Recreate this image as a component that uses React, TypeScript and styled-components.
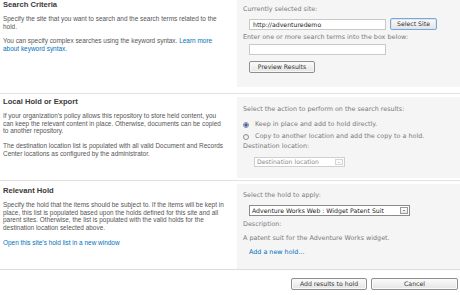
import React from "react";
import styled, { createGlobalStyle } from "styled-components";

const Global = createGlobalStyle`
  html, body { margin: 0; padding: 0; background: #fff; }
  * { box-sizing: border-box; }
`;

const Page = styled.div`
  width: 460px;
  height: 295px;
  overflow: hidden;
  background: #fff;
`;

const Section = styled.div<{ $gapTop?: number; $line?: boolean }>`
  display: grid;
  grid-template-columns: 237px 1fr;
  margin-top: ${(p) => p.$gapTop ?? 0}px;
  border-top: ${(p) => (p.$line ? "1px solid #e1e1e1" : "none")};
  padding-top: ${(p) => (p.$line ? 3 : 0)}px;
`;

const Desc = styled.div<{ $pt?: number }>`
  padding: ${(p) => p.$pt ?? 1}px 10px 0 3px;
  font-family: "Liberation Sans", Arial, sans-serif;
  font-size: 6.45px;
  line-height: 7.7px;
  color: #555;
`;

const Title = styled.div`
  font-weight: bold;
  font-size: 7.6px;
  line-height: 8px;
  color: #3a3a3a;
  margin-bottom: 6px;
`;

const Para = styled.p`
  margin: 0 0 7px 0;
`;

const Link = styled.a`
  color: #0072bc;
  text-decoration: none;
  cursor: pointer;
`;

const Controls = styled.div<{ $h: number; $pt: number }>`
  background: #f5f5f5;
  height: ${(p) => p.$h}px;
  padding: ${(p) => p.$pt}px 4px 0 6px;
  font-family: "DejaVu Sans", Verdana, sans-serif;
  font-size: 6.4px;
  line-height: 7px;
  color: #7a7a7a;
  display: flex;
  flex-direction: column;
  align-items: flex-start;
`;

const Label = styled.div<{ $mt?: number }>`
  margin-top: ${(p) => p.$mt ?? 0}px;
  white-space: nowrap;
`;

const Row = styled.div<{ $mt?: number; $ml?: number }>`
  display: flex;
  align-items: center;
  gap: 4px;
  margin-top: ${(p) => p.$mt ?? 0}px;
  margin-left: ${(p) => p.$ml ?? 0}px;
  white-space: nowrap;
`;

const TextBox = styled.div<{ $w: number }>`
  width: ${(p) => p.$w}px;
  height: 11px;
  background: #fff;
  border: 1px solid #c9c9c9;
  color: #222;
  font-family: "DejaVu Sans", Verdana, sans-serif;
  font-size: 6.2px;
  line-height: 9px;
  padding-left: 3px;
`;

const Button = styled.button<{ $w: number; $focus?: boolean }>`
  width: ${(p) => p.$w}px;
  height: 12px;
  padding: 0;
  border: 1px solid ${(p) => (p.$focus ? "#7fa6d3" : "#8f8f8f")};
  border-radius: 2px;
  background: linear-gradient(#fbfbfb, #e4e4e4);
  box-shadow: inset 0 0 0 1px ${(p) => (p.$focus ? "#d6e6f7" : "#f8f8f8")};
  font-family: "DejaVu Sans", Verdana, sans-serif;
  font-size: 6.2px;
  line-height: 10px;
  color: #333;
  cursor: pointer;
`;

const Radio = styled.span<{ $on?: boolean }>`
  display: inline-block;
  width: 6px;
  height: 6px;
  border-radius: 50%;
  border: 1px solid #8d8d8d;
  background: ${(p) =>
    p.$on
      ? "radial-gradient(circle, #2d63c6 0 1.3px, #7aa0dc 1.6px, #eef2f8 2.2px)"
      : "linear-gradient(#e8e8e8, #fff)"};
  margin-right: 2px;
  flex: none;
`;

const Select = styled.div<{ $w: number; $h: number; $dim?: boolean }>`
  width: ${(p) => p.$w}px;
  height: ${(p) => p.$h}px;
  display: flex;
  align-items: stretch;
  background: #fff;
  border: 1px solid ${(p) => (p.$dim ? "#cfcfcf" : "#8a8a8a")};
  color: ${(p) => (p.$dim ? "#8c8c8c" : "#222")};
  font-family: "DejaVu Sans", Verdana, sans-serif;
  font-size: 6.2px;
  line-height: ${(p) => p.$h - 2}px;
`;

const SelectText = styled.span`
  flex: 1;
  padding-left: 2px;
  overflow: hidden;
  white-space: nowrap;
`;

const Arrow = styled.span<{ $dim?: boolean }>`
  width: 8px;
  margin: 1px;
  border: 1px solid ${(p) => (p.$dim ? "#d5d5d5" : "#9a9a9a")};
  background: ${(p) => (p.$dim ? "#fafafa" : "linear-gradient(#fff, #e4e4e4)")};
  display: flex;
  align-items: center;
  justify-content: center;
  &::after {
    content: "";
    border-left: 1.5px solid transparent;
    border-right: 1.5px solid transparent;
    border-top: 1.5px solid ${(p) => (p.$dim ? "#aaa" : "#333")};
  }
`;

const Footer = styled.div`
  border-top: 1px solid #dcdcdc;
  display: flex;
  justify-content: flex-end;
  gap: 4px;
  padding: 8px 2px 0 0;
`;

export default function App() {
  return (
    <Page>
      <Global />
      <Section>
        <Desc>
          <Title>Search Criteria</Title>
          <Para>
            Specify the site that you want to search and the search terms related to the hold.
          </Para>
          <Para>
            You can specify complex searches using the keyword syntax.{" "}
            <Link>Learn more about keyword syntax.</Link>
          </Para>
        </Desc>
        <Controls $h={87} $pt={6}>
          <Label>Currently selected site:</Label>
          <Row $mt={5} $ml={6}>
            <TextBox $w={137}>http://adventuredemo</TextBox>
            <Button $w={47} $focus>Select Site</Button>
          </Row>
          <Label $mt={4}>Enter one or more search terms into the box below:</Label>
          <Row $mt={3} $ml={6}>
            <TextBox $w={137} />
          </Row>
          <Row $mt={6} $ml={6}>
            <Button $w={66}>Preview Results</Button>
          </Row>
        </Controls>
      </Section>

      <Section $gapTop={6} $line>
        <Desc>
          <Title>Local Hold or Export</Title>
          <Para>
            If your organization’s policy allows this repository to store held content, you can
            keep the relevant content in place. Otherwise, documents can be copied to another
            repository.
          </Para>
          <Para>
            The destination location list is populated with all valid Document and Records Center
            locations as configured by the administrator.
          </Para>
        </Desc>
        <Controls $h={81} $pt={9}>
          <Label>Select the action to perform on the search results:</Label>
          <Row $mt={8} $ml={0}>
            <Radio $on />
            <span>Keep in place and add to hold directly.</span>
          </Row>
          <Row $mt={5} $ml={0}>
            <Radio />
            <span>Copy to another location and add the copy to a hold.</span>
          </Row>
          <Label $mt={3}>Destination location:</Label>
          <Row $mt={7} $ml={11}>
            <Select $w={91} $h={10} $dim>
              <SelectText>Destination location</SelectText>
              <Arrow $dim />
            </Select>
          </Row>
        </Controls>
      </Section>

      <Section $gapTop={2} $line>
        <Desc $pt={3}>
          <Title>Relevant Hold</Title>
          <Para>
            Specify the hold that the items should be subject to. If the items will be kept in
            place, this list is populated based upon the holds defined for this site and all parent
            sites. Otherwise, the list is populated with the valid holds for the destination
            location selected above.
          </Para>
          <Para>
            <Link>Open this site’s hold list in a new window</Link>
          </Para>
        </Desc>
        <Controls $h={85} $pt={8}>
          <Label>Select the hold to apply:</Label>
          <Row $mt={6} $ml={6}>
            <Select $w={161} $h={11}>
              <SelectText>Adventure Works Web : Widget Patent Suit</SelectText>
              <Arrow />
            </Select>
          </Row>
          <Label $mt={5}>Description:</Label>
          <Label $mt={7}>A patent suit for the Adventure Works widget.</Label>
          <Row $mt={7} $ml={6}>
            <Link>Add a new hold...</Link>
          </Row>
        </Controls>
      </Section>

      <Footer>
        <Button $w={76}>Add results to hold</Button>
        <Button $w={87}>Cancel</Button>
      </Footer>
    </Page>
  );
}
